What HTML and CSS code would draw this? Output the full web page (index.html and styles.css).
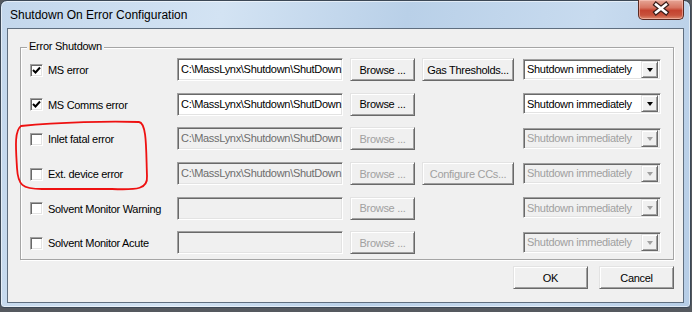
FILE: index.html
```html
<!DOCTYPE html>
<html>
<head>
<meta charset="utf-8">
<title>Shutdown On Error Configuration</title>
<link rel="stylesheet" href="styles.css">
</head>
<body>
<div class="window">
  <div class="titlebar">
    <span class="title">Shutdown On Error Configuration</span>
    <div class="close">
      <svg width="46" height="20" viewBox="0 0 46 20">
        <path d="M18 5.5 L28 13.5 M28 5.5 L18 13.5" stroke="#3a1e1a" stroke-width="5" stroke-linecap="square" fill="none"/>
        <path d="M18 5.5 L28 13.5 M28 5.5 L18 13.5" stroke="#ffffff" stroke-width="2.6" stroke-linecap="square" fill="none"/>
      </svg>
    </div>
  </div>
  <div class="client">
    <div class="group">
      <span class="group-title">Error Shutdown</span>
      <div class="rows">
        <label class="check"><span class="box"><svg width="9" height="9" viewBox="0 0 9 9"><path d="M1 4 L3.5 6.5 L8 1.5" stroke="#000" stroke-width="2" fill="none"/></svg></span>MS error</label>
        <div class="field">C:\MassLynx\Shutdown\ShutDown.exe</div>
        <div class="btn">Browse ...</div>
        <div class="btn">Gas Thresholds...</div>
        <div class="combo"><span class="combo-text">Shutdown immediately</span><span class="arrow"><i></i></span></div>

        <label class="check"><span class="box"><svg width="9" height="9" viewBox="0 0 9 9"><path d="M1 4 L3.5 6.5 L8 1.5" stroke="#000" stroke-width="2" fill="none"/></svg></span>MS Comms error</label>
        <div class="field">C:\MassLynx\Shutdown\ShutDown.exe</div>
        <div class="btn">Browse ...</div>
        <div class="empty"></div>
        <div class="combo"><span class="combo-text">Shutdown immediately</span><span class="arrow"><i></i></span></div>

        <label class="check"><span class="box"></span>Inlet fatal error</label>
        <div class="field disabled">C:\MassLynx\Shutdown\ShutDown.exe</div>
        <div class="btn disabled">Browse ...</div>
        <div class="empty"></div>
        <div class="combo disabled"><span class="combo-text">Shutdown immediately</span><span class="arrow"><i></i></span></div>

        <label class="check"><span class="box"></span>Ext. device error</label>
        <div class="field disabled">C:\MassLynx\Shutdown\ShutDown.exe</div>
        <div class="btn disabled">Browse ...</div>
        <div class="btn disabled">Configure CCs...</div>
        <div class="combo disabled"><span class="combo-text">Shutdown immediately</span><span class="arrow"><i></i></span></div>

        <label class="check"><span class="box"></span>Solvent Monitor Warning</label>
        <div class="field disabled"></div>
        <div class="btn disabled">Browse ...</div>
        <div class="empty"></div>
        <div class="combo disabled"><span class="combo-text">Shutdown immediately</span><span class="arrow"><i></i></span></div>

        <label class="check"><span class="box"></span>Solvent Monitor Acute</label>
        <div class="field disabled"></div>
        <div class="btn disabled">Browse ...</div>
        <div class="empty"></div>
        <div class="combo disabled"><span class="combo-text">Shutdown immediately</span><span class="arrow"><i></i></span></div>
      </div>
    </div>
    <div class="actions">
      <div class="btn wide">OK</div>
      <div class="btn wide">Cancel</div>
    </div>
  </div>
</div>
<svg class="annotation" width="692" height="312" viewBox="0 0 692 312">
  <path d="M21 126 C 60 122, 110 121, 139 122 C 147 123, 146 150, 147 176 C 148 189, 138 190, 112 189 L 42 189 C 22 189, 18 185, 17 168 C 16 150, 14 131, 21 126 Z" stroke="#ee1111" stroke-width="1.8" fill="none" stroke-linejoin="round"/>
</svg>
</body>
</html>
```
FILE: styles.css
```css
html, body {
  margin: 0;
  padding: 0;
}
body {
  width: 692px;
  height: 312px;
  overflow: hidden;
  background: #55595f;
  font-family: "Liberation Sans", Arial, sans-serif;
  font-size: 11px;
  color: #000;
  position: relative;
}
.window {
  box-sizing: border-box;
  width: 691px;
  height: 308px;
  border: 1px solid #3c4856;
  border-radius: 7px 7px 4px 4px;
  background: linear-gradient(100deg, #c3d7ec 0%, #d3e3f3 30%, #b9d0e8 55%, #c8dbef 80%, #b6cde6 100%);
  box-shadow: inset 0 0 0 1px rgba(255,255,255,0.55);
  padding: 0 6px 4px 6px;
}
.titlebar {
  height: 27px;
  display: flex;
  align-items: flex-start;
}
.title {
  font-size: 12px;
  line-height: 14px;
  margin-top: 7px;
  padding-left: 3px;
  color: #000;
}
.close {
  margin-left: auto;
  margin-top: -1px;
  width: 46px;
  height: 20px;
  box-sizing: border-box;
  border: 1px solid #5a2a22;
  border-top: none;
  border-radius: 0 0 5px 5px;
  background: linear-gradient(#e6a696 0%, #d77562 40%, #c4432f 55%, #c8523c 80%, #dc8a6e 100%);
  box-shadow: inset 0 0 0 1px rgba(255,210,200,0.5);
}
.close svg {
  display: block;
  margin: -1px 0 0 -1px;
}
.client {
  height: 275px;
  box-sizing: border-box;
  border: 1px solid #5f6e7f;
  background: #f0f0f0;
  padding-top: 18px;
}
.group {
  position: relative;
  margin: 0 9px 0 12px;
  border: 1px solid #a5a5a5;
  box-shadow: 1px 1px 0 #ffffff, inset 1px 1px 0 #ffffff;
  padding: 10px 0 5px 9px;
}
.group-title {
  position: absolute;
  top: -8px;
  left: 6px;
  padding: 0 2px;
  background: #f0f0f0;
  line-height: 13px;
  letter-spacing: -0.25px;
}
.rows {
  display: grid;
  grid-template-columns: 140px 166px 65px 92px 140px;
  grid-auto-rows: 23px;
  column-gap: 7px;
  row-gap: 11.7px;
}
.check {
  display: flex;
  align-items: center;
  margin-top: 1px;
  letter-spacing: -0.3px;
  white-space: nowrap;
}
.box {
  box-sizing: border-box;
  width: 13px;
  height: 13px;
  flex: none;
  margin-right: 5px;
  background: #fff;
  border: 1px solid;
  border-color: #a0a0a0 #ffffff #ffffff #a0a0a0;
  box-shadow: inset 1px 1px 0 #696969, inset -1px -1px 0 #e3e3e3;
  display: flex;
  align-items: center;
  justify-content: center;
}
.box svg {
  display: block;
}
.field {
  box-sizing: border-box;
  height: 23px;
  background: #fff;
  border: 1px solid;
  border-color: #a0a0a0 #ffffff #ffffff #a0a0a0;
  box-shadow: inset 1px 1px 0 #696969, inset -1px -1px 0 #e3e3e3;
  padding: 0 2px 0 3px;
  line-height: 21px;
  white-space: nowrap;
  overflow: hidden;
  letter-spacing: -0.3px;
}
.field.disabled {
  background: #f0f0f0;
  color: #6d6d6d;
}
.btn {
  box-sizing: border-box;
  height: 23px;
  background: #f0f0f0;
  border: 1px solid;
  border-color: #e3e3e3 #696969 #696969 #e3e3e3;
  box-shadow: inset 1px 1px 0 #ffffff, inset -1px -1px 0 #a0a0a0;
  display: flex;
  align-items: center;
  justify-content: center;
  white-space: nowrap;
  letter-spacing: -0.3px;
}
.btn.disabled {
  color: #a0a0a0;
}
.combo {
  box-sizing: border-box;
  width: 138px;
  height: 21px;
  align-self: center;
  margin-left: 2px;
  margin-top: -1px;
  background: #fff;
  border: 1px solid;
  border-color: #a0a0a0 #ffffff #ffffff #a0a0a0;
  box-shadow: inset 1px 1px 0 #696969, inset -1px -1px 0 #e3e3e3;
  display: flex;
  align-items: center;
  padding: 0 2px 0 3px;
}
.combo-text {
  flex: 1;
  white-space: nowrap;
  letter-spacing: -0.3px;
}
.arrow {
  box-sizing: border-box;
  width: 17px;
  height: 17px;
  background: #f0f0f0;
  border: 1px solid;
  border-color: #e3e3e3 #696969 #696969 #e3e3e3;
  box-shadow: inset 1px 1px 0 #ffffff, inset -1px -1px 0 #a0a0a0;
  display: flex;
  align-items: center;
  justify-content: center;
}
.arrow i {
  display: block;
  width: 0;
  height: 0;
  border-left: 3.5px solid transparent;
  border-right: 3.5px solid transparent;
  border-top: 4px solid #000;
  margin-top: 1px;
}
.combo.disabled {
  background: #f0f0f0;
  color: #a0a0a0;
}
.combo.disabled .arrow i {
  border-top-color: #a0a0a0;
}
.actions {
  display: flex;
  justify-content: flex-end;
  gap: 11px;
  margin: 6px 9px 0 0;
}
.btn.wide {
  width: 75px;
}
.annotation {
  position: absolute;
  left: 0;
  top: 0;
  pointer-events: none;
}
```
